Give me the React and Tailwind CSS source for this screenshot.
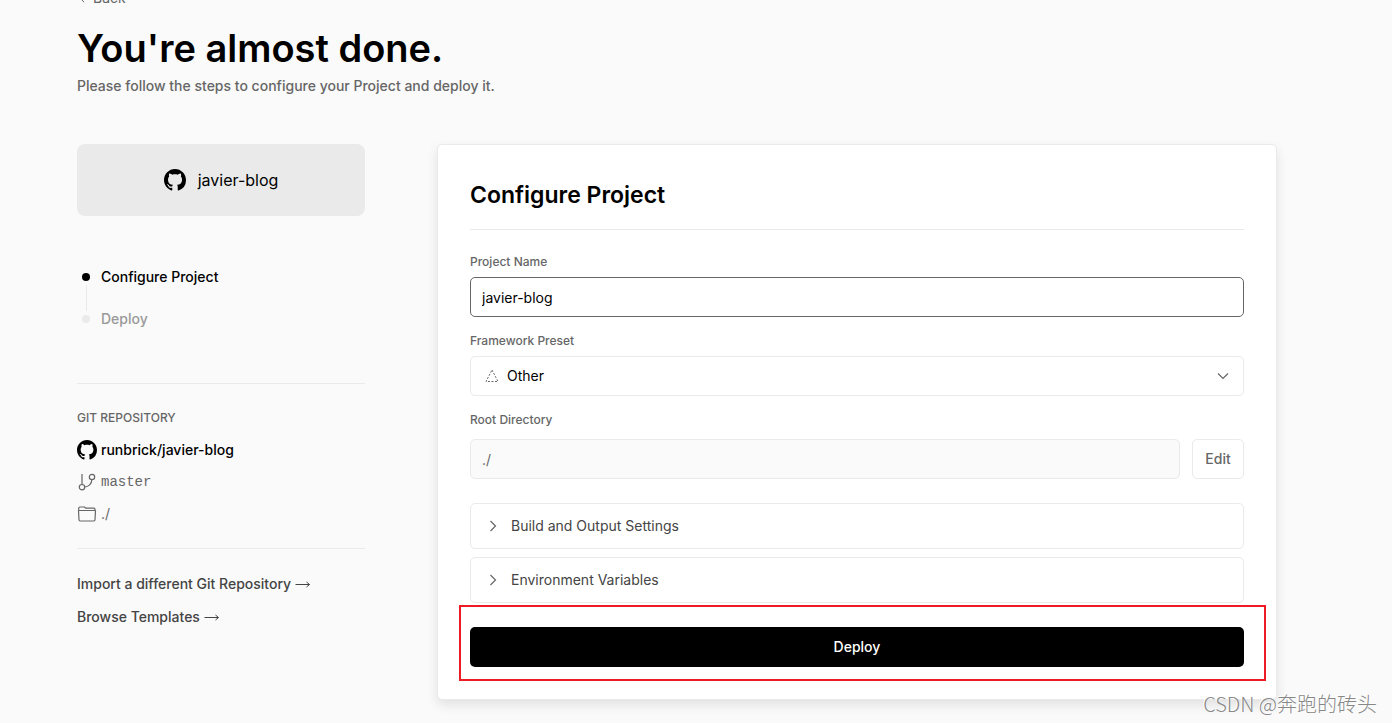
import { useState } from "react";

const GithubIcon = ({ className }) => (
  <svg viewBox="0 0 16 16" className={className} fill="currentColor" aria-hidden="true">
    <path
      fillRule="evenodd"
      d="M8 0C3.58 0 0 3.58 0 8c0 3.54 2.29 6.53 5.47 7.59.4.07.55-.17.55-.38 0-.19-.01-.82-.01-1.49-2.01.37-2.53-.49-2.69-.94-.09-.23-.48-.94-.82-1.13-.28-.15-.68-.52-.01-.53.63-.01 1.08.58 1.23.82.72 1.21 1.87.87 2.33.66.07-.52.28-.87.51-1.07-1.78-.2-3.64-.89-3.64-3.95 0-.87.31-1.59.82-2.15-.08-.2-.36-1.02.08-2.12 0 0 .67-.21 2.2.82.64-.18 1.32-.27 2-.27s1.36.09 2 .27c1.53-1.04 2.2-.82 2.2-.82.44 1.1.16 1.92.08 2.12.51.56.82 1.27.82 2.15 0 3.07-1.87 3.75-3.65 3.95.29.25.54.73.54 1.48 0 1.07-.01 1.93-.01 2.2 0 .21.15.46.55.38A8.01 8.01 0 0 0 16 8c0-4.42-3.58-8-8-8z"
    />
  </svg>
);

const BranchIcon = () => (
  <svg viewBox="0 0 20 20" className="w-5 h-5 shrink-0" fill="none" stroke="currentColor" strokeWidth="1.2" aria-hidden="true">
    <path d="M5 2v10.4M14.8 7.8c0 4.2-3.4 7-7 7.2" />
    <circle cx="5" cy="15.2" r="2.7" />
    <circle cx="15" cy="5" r="2.7" />
  </svg>
);

const FolderIcon = () => (
  <svg viewBox="0 0 20 20" className="w-5 h-5 shrink-0" fill="none" stroke="currentColor" strokeWidth="1.2" strokeLinejoin="round" aria-hidden="true">
    <path d="M1.7 6.500V4.200c0-.9.5-1.200 1.200-1.200h4.500l1.500 1.200h7.900c.8 0 1.200.4 1.200 1.200v1.100M1.500 6.500h17l-.5 9.300c0 .9-.5 1.200-1.200 1.200H3.200c-.8 0-1.200-.4-1.200-1.200z" />
  </svg>
);

const Chevron = ({ className }) => (
  <svg viewBox="0 0 12 12" className={className} fill="none" stroke="currentColor" strokeWidth="1.2" aria-hidden="true">
    <path d="M3.500 1 8.500 6l-5 5" />
  </svg>
);

const Arrow = () => (
  <svg viewBox="0 0 16 10" className="w-4 h-2.5" fill="none" stroke="currentColor" aria-hidden="true">
    <path d="M.5 5.500h14M11.500 3l3 2.500-3 2.500" />
  </svg>
);

const SECTIONS = ["Build and Output Settings", "Environment Variables"];
const LINKS = ["Import a different Git Repository", "Browse Templates"];

function Sidebar() {
  return (
    <aside className="w-72 shrink-0">
      <div className="h-[72px] rounded-lg bg-[#eaeaea] flex items-center justify-center gap-3 text-base">
        <GithubIcon className="w-[22px] h-[22px]" />
        <span>javier-blog</span>
      </div>

      <ol className="mt-[51px] pl-[5px] text-sm font-medium leading-5">
        <li className="flex items-center gap-[11px]">
          <span className="w-2 h-2 rounded-full bg-black" />
          Configure Project
        </li>
        <li className="w-px h-[26px] -my-0.5 ml-1 bg-[#eaeaea]" aria-hidden="true" />
        <li className="flex items-center gap-[11px] text-[#999]">
          <span className="w-2 h-2 rounded-full bg-[#eaeaea]" />
          Deploy
        </li>
      </ol>

      <section className="mt-[54px] pt-6 pb-6 border-y border-[#eaeaea] text-sm text-[#666]">
        <h2 className="text-xs font-medium leading-5">GIT REPOSITORY</h2>
        <ul className="mt-3 flex flex-col gap-3 leading-5">
          <li className="flex items-center gap-1 font-medium text-black">
            <GithubIcon className="w-5 h-5 shrink-0" />
            <a href="#repo">runbrick/javier-blog</a>
          </li>
          <li className="flex items-center gap-1 font-['Liberation_Mono',monospace]">
            <BranchIcon />
            master
          </li>
          <li className="flex items-center gap-1">
            <FolderIcon />
            ./
          </li>
        </ul>
      </section>

      <nav className="mt-[25px] flex flex-col items-start gap-[13px] text-sm font-medium leading-5 text-[#444]">
        {LINKS.map((label) => (
          <a key={label} href="#new" className="flex items-center gap-1">
            {label}
            <Arrow />
          </a>
        ))}
      </nav>
    </aside>
  );
}

function ConfigureCard() {
  const [name, setName] = useState("javier-blog");

  return (
    <main className="flex-1 min-w-0 rounded-[5px] border border-[#eaeaea] bg-white p-8 shadow-[0_5px_12px_rgba(0,0,0,0.1)]">
      <h2 className="pb-4 border-b border-[#eaeaea] text-[23px] font-semibold leading-9">Configure Project</h2>

      <form className="mt-6 text-sm" onSubmit={(e) => e.preventDefault()}>
        <label htmlFor="name" className="block text-xs font-medium leading-[15px] text-[#666]">Project Name</label>
        <input
          id="name"
          value={name}
          onChange={(e) => setName(e.target.value)}
          className="block mt-2 w-full h-10 px-[11px] rounded-[5px] border border-[#666] bg-white outline-none"
        />

        <label htmlFor="preset" className="block mt-4 text-xs font-medium leading-[15px] text-[#666]">Framework Preset</label>
        <div className="relative mt-2">
          <select id="preset" className="block appearance-none w-full h-10 pl-9 pr-10 rounded-[5px] border border-[#eaeaea] bg-white">
            <option>Other</option>
          </select>
          <svg viewBox="0 0 14 14" className="absolute left-[15px] top-[13px] w-3.5 h-3.5 pointer-events-none" fill="none" stroke="#666" strokeDasharray="2 1.500" aria-hidden="true">
            <path d="M7 1 13 12.500H1z" />
          </svg>
          <Chevron className="absolute right-[15px] top-3.5 w-3 h-3 rotate-90 text-[#666] pointer-events-none" />
        </div>

        <label htmlFor="root" className="block mt-4 text-xs font-medium leading-[15px] text-[#666]">Root Directory</label>
        <div className="mt-3 flex gap-3">
          <input
            id="root"
            value="./"
            disabled
            className="flex-1 min-w-0 h-10 px-[11px] rounded-[5px] border border-[#eaeaea] bg-[#fafafa] text-[#666]"
          />
          <button type="button" className="w-[52px] h-10 rounded-[5px] border border-[#eaeaea] bg-white font-medium text-[#666]">
            Edit
          </button>
        </div>

        <div className="mt-6 flex flex-col gap-2">
          {SECTIONS.map((title) => (
            <button
              key={title}
              type="button"
              className="h-[46px] px-4 flex items-center gap-3 rounded-[5px] border border-[#eaeaea] bg-white text-[#444]"
            >
              <Chevron className="w-3 h-3 text-[#666]" />
              {title}
            </button>
          ))}
        </div>

        <div className="relative mt-6">
          <button type="submit" className="block w-full h-10 rounded-[5px] bg-black text-white font-medium">
            Deploy
          </button>
          <div className="absolute -left-[11px] -right-[22px] -top-[22px] -bottom-3.5 border-2 border-[#ed1c24] pointer-events-none" />
        </div>
      </form>
    </main>
  );
}

export default function App() {
  return (
    <div className="relative min-h-screen overflow-hidden bg-[#fafafa] pl-[77px] pr-[115px] pb-[23px] font-['Inter',sans-serif] text-black">
      <header className="-mt-3">
        <a href="#back" className="flex w-fit items-center gap-1.5 text-sm leading-5 text-[#666]">
          <Chevron className="w-2.5 h-2.5 rotate-180" />
          Back
        </a>
        <h1 className="mt-4 text-[38px] font-semibold leading-[48px]">You're almost done.</h1>
        <p className="mt-1 text-sm font-medium leading-5 text-[#666]">
          Please follow the steps to configure your Project and deploy it.
        </p>
      </header>

      <div className="mt-12 flex items-start gap-[72px]">
        <Sidebar />
        <ConfigureCard />
      </div>

      <div className="absolute right-[15px] bottom-1 text-xl font-light leading-[30px] text-[#888] font-['Noto_Sans_CJK_SC',sans-serif] [text-shadow:-1px_-1px_0_#fff]">
        CSDN @奔跑的砖头
      </div>
    </div>
  );
}
